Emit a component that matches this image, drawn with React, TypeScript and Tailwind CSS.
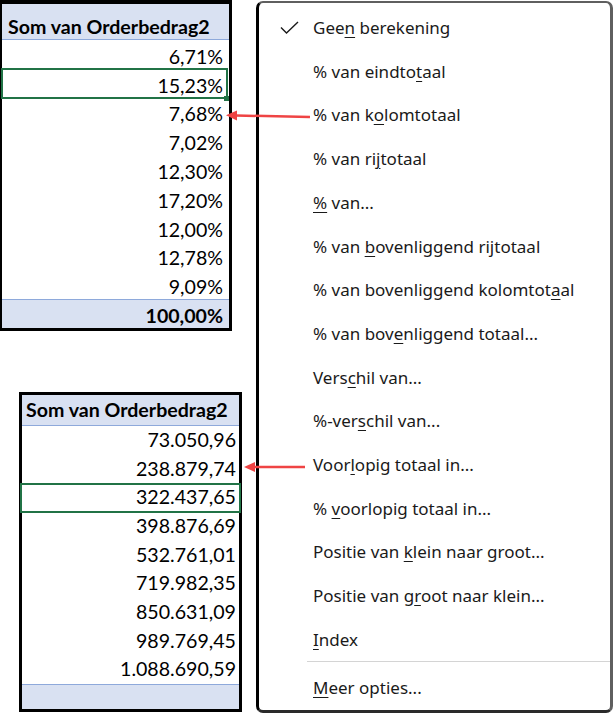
import React from "react";

const topVals = ["6,71%", "15,23%", "7,68%", "7,02%", "12,30%", "17,20%", "12,00%", "12,78%", "9,09%"];
const botVals = ["73.050,96", "238.879,74", "322.437,65", "398.876,69", "532.761,01", "719.982,35", "850.631,09", "989.769,45", "1.088.690,59"];

type Item = { pre: string; u: string; post: string; checked?: boolean };
const items: Item[] = [
  { pre: "Gee", u: "n", post: " berekening", checked: true },
  { pre: "% van eindto", u: "t", post: "aal" },
  { pre: "% van k", u: "o", post: "lomtotaal" },
  { pre: "% van ri", u: "j", post: "totaal" },
  { pre: "", u: "%", post: " van..." },
  { pre: "% van ", u: "b", post: "ovenliggend rijtotaal" },
  { pre: "% van bovenliggend kolomtot", u: "a", post: "al" },
  { pre: "% van bov", u: "e", post: "nliggend totaal..." },
  { pre: "Vers", u: "c", post: "hil van..." },
  { pre: "%-ver", u: "s", post: "chil van..." },
  { pre: "Voor", u: "l", post: "opig totaal in..." },
  { pre: "% ", u: "v", post: "oorlopig totaal in..." },
  { pre: "Positie van ", u: "k", post: "lein naar groot..." },
  { pre: "Positie van g", u: "r", post: "oot naar klein..." },
  { pre: "", u: "I", post: "ndex" },
];

const tableFont = { fontFamily: "Lato, 'Liberation Sans', sans-serif" };
const menuFont = { fontFamily: "'Noto Sans', 'Open Sans', sans-serif" };

function Label({ it }: { it: Item }) {
  return (
    <span>
      {it.pre}
      <span className="underline underline-offset-[3px] decoration-[1px]">{it.u}</span>
      {it.post}
    </span>
  );
}

export default function App() {
  return (
    <div className="relative w-[616px] h-[715px] bg-white overflow-hidden flex">
      {/* Left column with pivot tables */}
      <div className="w-[256px] shrink-0 flex flex-col text-black" style={tableFont}>
        {/* Top table */}
        <div className="w-[232px] border-[3px] border-t-[4px] border-l-[2px] border-black text-[19.6px]">
          <div className="h-[36px] bg-[#D9E1F2] border-b border-[#8EA9DB] flex items-end pl-[6px] pb-0 font-bold leading-[24px]">
            Som van Orderbedrag2
          </div>
          {topVals.map((v, i) => (
            <div key={v} className="relative h-[28.8px] flex items-end justify-end pr-[6px] pb-0 leading-[24px]">
              {v}
              {i === 1 && (
                <>
                  <div className="absolute left-[-1px] right-[1px] top-[-1px] bottom-[-1px] border-2 border-[#217346]" />
                  <div className="absolute right-[0px] bottom-[-3px] w-[5px] h-[5px] bg-[#217346]" />
                </>
              )}
            </div>
          ))}
          <div className="h-[29px] bg-[#D9E1F2] border-t border-[#8EA9DB] flex items-end justify-end pr-[6px] pb-0 font-bold leading-[24px]">
            100,00%
          </div>
        </div>

        {/* Bottom table */}
        <div className="ml-[19px] mt-[61px] w-[223px] border-[3px] border-black text-[19.6px]">
          <div className="h-[31px] bg-[#D9E1F2] border-b border-[#8EA9DB] flex items-end pl-[4px] pb-[3px] font-bold leading-[24px] whitespace-nowrap">
            Som van Orderbedrag2
          </div>
          {botVals.map((v, i) => (
            <div key={v} className="relative h-[28.7px] flex items-end justify-end pr-[3px] pb-[3px] leading-[24px]">
              {v}
              {i === 2 && (
                <div className="absolute left-[-2px] right-[-2px] top-[-1px] bottom-[-1px] border-2 border-[#217346]" />
              )}
            </div>
          ))}
          <div className="h-[25px] bg-[#D9E1F2] border-t border-[#8EA9DB]" />
        </div>
      </div>

      {/* Context menu */}
      <div
        className="mt-[1px] w-[357px] h-[712px] bg-white border-t-2 border-r-[3px] border-b-[3px] border-l-[3px] border-[#5f5f5f] border-l-black border-b-[#2a2a2a] rounded-[7px] flex flex-col pt-[3px] text-[#1a1a1a] text-[17px]"
        style={menuFont}
      >
        {items.map((it, i) => (
          <div key={i} className="relative h-[44px] flex items-center pl-[54px] whitespace-nowrap">
            {it.checked && (
              <svg className="absolute left-[21px] top-[15px]" width="19" height="13" viewBox="0 0 19 13" fill="none">
                <path d="M1 6.5 L6.5 12 L18 1" stroke="#1a1a1a" strokeWidth="1.4" />
              </svg>
            )}
            <Label it={it} />
          </div>
        ))}
        <div className="ml-[48px] h-px bg-[#d4d4d4]" />
        <div className="h-[44px] mt-[4px] flex items-center pl-[54px] whitespace-nowrap">
          <Label it={{ pre: "", u: "M", post: "eer opties..." }} />
        </div>
      </div>

      {/* Arrows */}
      <svg className="absolute left-0 top-0 pointer-events-none" width="616" height="715">
        <g stroke="#EF4444" strokeWidth="2.5" fill="#EF4444">
          <line x1="310" y1="117" x2="236" y2="115.5" />
          <polygon points="226,115.3 237,110.5 237,120.5" stroke="none" />
          <line x1="305" y1="467" x2="254" y2="467" />
          <polygon points="244,467 255,462 255,472" stroke="none" />
        </g>
      </svg>
    </div>
  );
}
